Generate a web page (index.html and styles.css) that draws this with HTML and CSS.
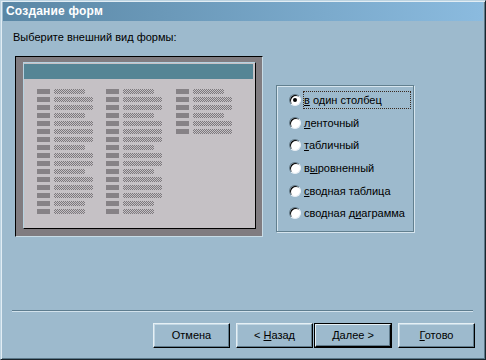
FILE: index.html
```html
<!DOCTYPE html>
<html lang="ru">
<head>
  <meta charset="UTF-8" />
  <title>Создание форм</title>
  <link rel="stylesheet" href="styles.css">
</head>
<body>
  <div class="window">
    <div class="titlebar">Создание форм</div>
    <div class="content">
      <div class="prompt">Выберите внешний вид формы:</div>

      <div class="main">
        <!-- preview of the chosen layout -->
        <div class="preview-frame">
          <div class="preview">
            <div class="preview-head"></div>
            <div class="preview-body">
              <div class="col">
                <i class="fld short"></i><i class="fld"></i><i class="fld"></i><i class="fld short"></i>
                <i class="fld"></i><i class="fld"></i><i class="fld"></i><i class="fld short"></i>
                <i class="fld"></i><i class="fld"></i><i class="fld short"></i><i class="fld"></i>
                <i class="fld"></i><i class="fld"></i><i class="fld short"></i><i class="fld short"></i>
              </div>
              <div class="col">
                <i class="fld short"></i><i class="fld"></i><i class="fld"></i><i class="fld short"></i>
                <i class="fld"></i><i class="fld"></i><i class="fld"></i><i class="fld short"></i>
                <i class="fld"></i><i class="fld"></i><i class="fld short"></i><i class="fld"></i>
                <i class="fld"></i><i class="fld"></i><i class="fld short"></i><i class="fld short"></i>
              </div>
              <div class="col">
                <i class="fld short"></i><i class="fld"></i><i class="fld"></i><i class="fld short"></i>
                <i class="fld"></i><i class="fld"></i>
              </div>
            </div>
          </div>
        </div>

        <div class="options">
          <label class="option"><span class="radio checked"></span><span class="text focus"><u>в</u> один столбец</span></label>
          <label class="option"><span class="radio"></span><span class="text"><u>л</u>енточный</span></label>
          <label class="option"><span class="radio"></span><span class="text"><u>т</u>абличный</span></label>
          <label class="option"><span class="radio"></span><span class="text">в<u>ы</u>ровненный</span></label>
          <label class="option"><span class="radio"></span><span class="text"><u>с</u>водная таблица</span></label>
          <label class="option"><span class="radio"></span><span class="text">сводная д<u>и</u>аграмма</span></label>
        </div>
      </div>

      <div class="separator"></div>

      <div class="buttons">
        <div class="btn"><span>Отмена</span></div>
        <div class="btn back"><span>&lt; <u>Н</u>азад</span></div>
        <div class="btn next">
          <div class="btn-inner"><span><u>Д</u>алее &gt;</span></div>
        </div>
        <div class="btn finish"><span><u>Г</u>отово</span></div>
      </div>
    </div>
  </div>
</body>
</html>
```

FILE: styles.css
```css
* {
  box-sizing: border-box;
}

body {
  margin: 0;
  background: #9dbacd;
  font-family: "Liberation Sans", Arial, sans-serif;
  font-size: 11px;
  color: #000;
}

.window {
  width: 486px;
  height: 360px;
  padding: 1px 2px 2px 2px;
  background: #9dbacd;
  border: 1px solid;
  border-color: #bcd3e1 #1a252c #1a252c #bcd3e1;
  box-shadow: inset 1px 1px 0 #e2edf4, inset -1px -1px 0 #5a7788;
  display: flex;
  flex-direction: column;
}

.titlebar {
  height: 19px;
  padding: 3px 0 0 3px;
  background: linear-gradient(to right, #5a87a5, #8bbbdf);
  color: #fff;
  font-weight: bold;
  font-size: 12px;
  line-height: 13px;
  letter-spacing: 0.2px;
}

.content {
  padding: 10px 8px 0 10px;
  display: flex;
  flex-direction: column;
}

.prompt {
  line-height: 13px;
}

.main {
  display: flex;
  align-items: flex-start;
  margin-top: 12px;
  margin-left: 2px;
}

/* preview area */
.preview-frame {
  width: 248px;
  height: 181px;
  padding: 5px 6px 7px 7px;
  background: #807c80;
  border: 1px solid;
  border-color: #000 #c8dce6 #c8dce6 #000;
}

.preview {
  height: 100%;
  background: #c5c1c5;
  border: 1px solid;
  border-color: #b6d2e0 #000 #000 #b6d2e0;
  padding-top: 1px;
}

.preview-head {
  height: 15px;
  margin-right: 2px;
  background: #558595;
}

.preview-body {
  display: grid;
  grid-template-columns: 69px 70px 1fr;
  padding: 10px 0 0 13px;
}

.col {
  display: flex;
  flex-direction: column;
  gap: 3px;
}

.fld {
  display: flex;
  gap: 4px;
  height: 5px;
}

.fld::before {
  content: "";
  width: 13px;
  background: #868286;
}

.fld::after {
  content: "";
  width: 39px;
  background: repeating-conic-gradient(#7c787c 0 25%, transparent 0 50%) 0 0 / 2px 2px;
}

.fld.short::after {
  width: 31px;
}

/* radio group */
.options {
  width: 138px;
  height: 147px;
  margin-top: 29px;
  margin-left: 13px;
  padding: 5px 0 0 12px;
  border: 1px solid #62808f;
  box-shadow: inset 1px 1px 0 #d6e5ee, 1px 1px 0 #d6e5ee;
  display: grid;
  grid-auto-rows: 18px;
  row-gap: 4.7px;
  align-content: start;
}

.option {
  display: flex;
  align-items: center;
}

.radio {
  width: 12px;
  height: 12px;
  flex: none;
  border-radius: 50%;
  background: #fff;
  border: 1px solid;
  border-color: #5e7686 #e6eef4 #e6eef4 #5e7686;
  box-shadow: inset 1px 1px 0 #000;
  display: flex;
  align-items: center;
  justify-content: center;
}

.radio.checked::after {
  content: "";
  width: 4px;
  height: 4px;
  border-radius: 50%;
  background: #000;
}

.text {
  flex: 1;
  margin-left: 2px;
  margin-right: 2px;
  height: 18px;
  padding: 2px 0 0 0;
  line-height: 13px;
  border: 1px solid transparent;
  white-space: nowrap;
}

.text.focus {
  border: 1px dotted #3a2a20;
}

.separator {
  margin: 73px 0 0 -1px;
  width: 461px;
  height: 2px;
  border-top: 1px solid #5e7d8f;
  border-bottom: 1px solid #d2e2ec;
}

/* wizard buttons */
.buttons {
  display: flex;
  justify-content: flex-end;
  margin-top: 11px;
}

.btn {
  width: 77px;
  height: 25px;
  border: 1px solid;
  border-color: #e6f0f5 #000 #000 #e6f0f5;
  box-shadow: inset -1px -1px 0 #5f7b8c, inset 1px 1px 0 #c2d7e4;
  display: flex;
  align-items: center;
  justify-content: center;
  line-height: 13px;
  white-space: pre;
}

.back {
  margin-left: 6px;
}

.next {
  width: 78px;
  margin-left: 1px;
  border: 1px solid #000;
  box-shadow: none;
  padding: 0;
}

.btn-inner {
  width: 100%;
  height: 100%;
  border: 1px solid;
  border-color: #e6f0f5 #000 #000 #e6f0f5;
  box-shadow: inset -1px -1px 0 #5f7b8c;
  display: flex;
  align-items: center;
  justify-content: center;
}

.finish {
  margin-left: 6px;
}

u {
  text-decoration: underline;
  text-underline-offset: 1px;
}
```
